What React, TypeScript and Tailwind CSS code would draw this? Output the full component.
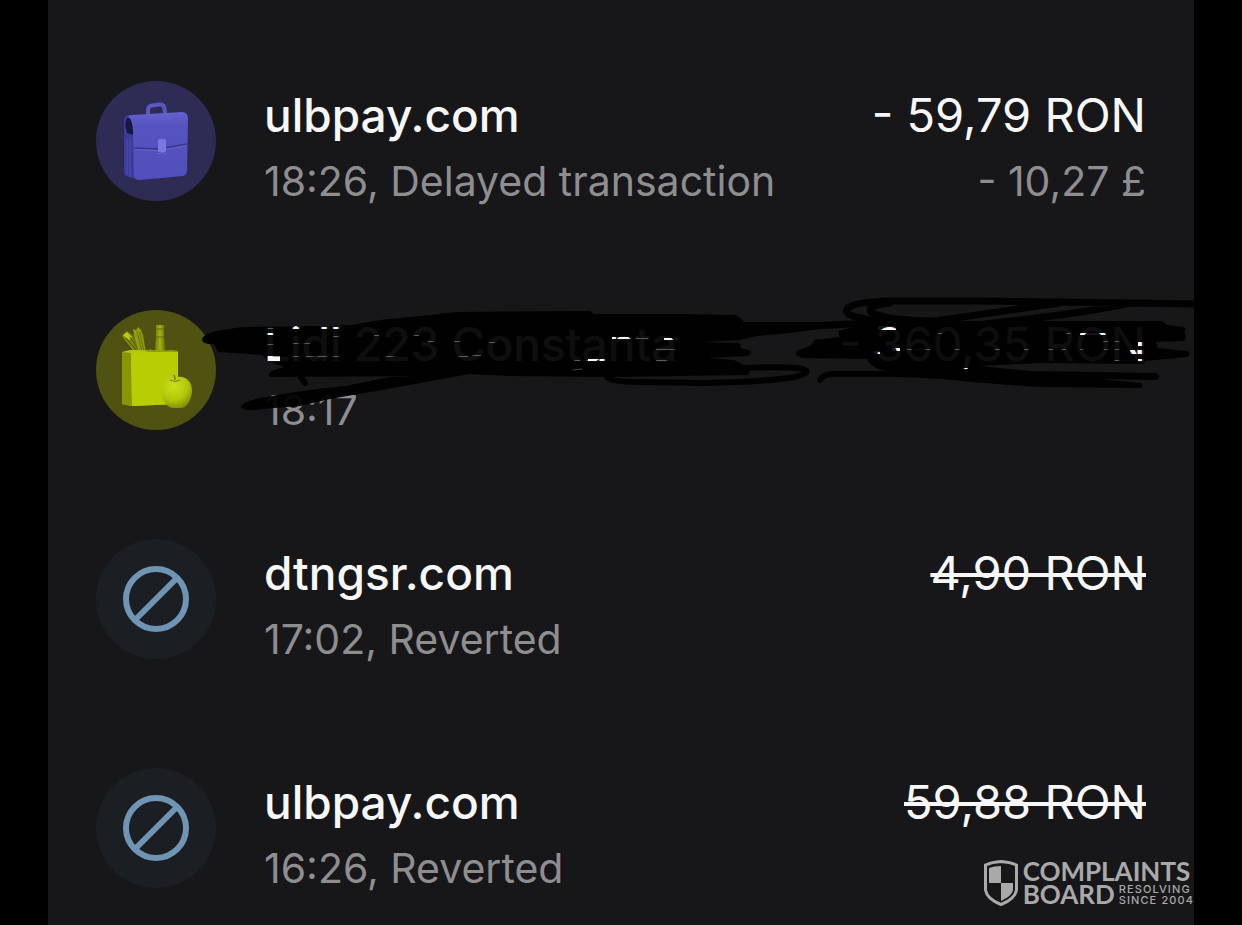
import { useId } from "react";

type IconName = "briefcase" | "groceries" | "blocked";

type Transaction = {
    merchant: string;
    details: string;
    amount: string;
    secondary?: string;
    icon: IconName;
    reverted?: boolean;
    redacted?: boolean;
};

const transactions: Transaction[] = [
    { merchant: "ulbpay.com", details: "18:26, Delayed transaction", amount: "- 59,79 RON", secondary: "- 10,27 £", icon: "briefcase" },
    { merchant: "Lidl 223 Constanta", details: "18:17", amount: "- 360,35 RON", icon: "groceries", redacted: true },
    { merchant: "dtngsr.com", details: "17:02, Reverted", amount: "4,90 RON", icon: "blocked", reverted: true },
    { merchant: "ulbpay.com", details: "16:26, Reverted", amount: "59,88 RON", icon: "blocked", reverted: true },
];

const BriefcaseIcon = () => (
    <svg className="size-30 shrink-0" viewBox="0 0 120 120" aria-hidden="true">
        <defs>
            <linearGradient id="case-front" x1="0" y1="0" x2="0" y2="1">
                <stop offset="0" stopColor="#6562d0" />
                <stop offset="0.2" stopColor="#5754c0" />
                <stop offset="1" stopColor="#514fbd" />
            </linearGradient>
        </defs>
        <circle cx="60" cy="60" r="60" fill="#2e2c55" />
        <path d="M52 35v-6q0-4 4-4.500l7-1q5-0.500 5.500 4l.5 6" fill="none" stroke="#5b58bd" strokeWidth="4" />
        <path d="M28 40q0-5 4-6l5 4 3 60-10-3q-2-1-2-3z" fill="#3d3a99" />
        <path d="M31 37q7-1 7 9v8l-7-2q-3-9 0-15z" fill="#1a1742" />
        <path d="M31 58v36M34 58v38" stroke="#514eb0" strokeWidth="1" />
        <path d="M32 35q1-1 4-1l50-3q6 0 6 7l-1 52q0 4-4 5l-44 4q-4 0-5-4l-1-45q0-10-5-15z" fill="url(#case-front)" />
        <path d="M38 67l25 1 28-5" fill="none" stroke="#38358c" strokeWidth="1.500" />
        <path d="M39 68.500l24 1.200 27-5" fill="none" stroke="#6663cf" strokeWidth="1" />
        <rect x="62" y="58" width="8" height="15" rx="2" fill="#7c78e2" />
        <path d="M62 71q4 3 8 0" fill="none" stroke="#48459f" strokeWidth="1" />
    </svg>
);

const GroceriesIcon = () => (
    <svg className="size-30 shrink-0" viewBox="0 0 120 120" aria-hidden="true">
        <defs>
            <radialGradient id="apple" cx="0.4" cy="0.3" r="0.75">
                <stop offset="0" stopColor="#cbe01a" />
                <stop offset="0.6" stopColor="#b2c70a" />
                <stop offset="1" stopColor="#7d8d08" />
            </radialGradient>
            <linearGradient id="bottle" x1="0" x2="1">
                <stop offset="0" stopColor="#6d7a08" />
                <stop offset="0.5" stopColor="#a1b30c" />
                <stop offset="1" stopColor="#66720a" />
            </linearGradient>
        </defs>
        <circle cx="60" cy="60" r="60" fill="#4f5210" />
        <path d="M26 26l5-5 5 4 8 17h-6z" fill="#7e8e0a" />
        <path d="M27 25l4-3 5 5-3 3z" fill="#b7cd12" />
        <path d="M26 31l13 12M30 28l12 14M34 27l10 15" stroke="#444b08" strokeWidth="1" />
        <path d="M37 19l3 1 2-3 3 3 2 5 3 18h-7l-5-17z" fill="#8e9f0b" />
        <path d="M41 21l5 21M44 22l4 20" stroke="#65710a" strokeWidth="1" />
        <path d="M60 15h8v13q1 4 1 15H59q0-11 1-15z" fill="url(#bottle)" />
        <path d="M60 19h8M60 27h8" stroke="#616d08" strokeWidth="1" />
        <path d="M26 42l8-2 48 1v53l-46 2-10-2z" fill="#b4c804" />
        <path d="M26 42l9 1 1 53-10-2z" fill="#869604" />
        <path d="M35 43l47-2v53l-46 2z" fill="#b9cd04" />
        <path d="M50 42l4-3 3 2 5-2 4 2 10-1 6 1v1z" fill="#8e9f0b" />
        <path d="M79 68c-7-4-14 2-14 11 0 10 6 19 12 19h8c6 0 11-9 11-18 0-10-9-16-17-12z" fill="url(#apple)" />
        <path d="M74 70q5 3 10 0" fill="none" stroke="#73820a" strokeWidth="1" />
        <path d="M79 70q0-3-1-5" fill="none" stroke="#6d7908" strokeWidth="1.500" />
    </svg>
);

const BlockedIcon = () => (
    <svg className="size-30 shrink-0" viewBox="0 0 120 120" aria-hidden="true">
        <circle cx="60" cy="60" r="60" fill="#1b1f24" />
        <circle cx="60" cy="60" r="30" fill="none" stroke="#7094b3" strokeWidth="6" />
        <path d="M40 80L80 40" stroke="#7094b3" strokeWidth="6" />
    </svg>
);

const icons = {
    briefcase: BriefcaseIcon,
    groceries: GroceriesIcon,
    blocked: BlockedIcon,
};

// x, y, width, height of the slits between marker strokes
const slits = [
    [266, 328, 8, 1], [266, 333, 8, 2], [266, 344, 8, 1], [267, 356, 13, 6],
    [292, 325, 8, 4], [292, 343, 18, 1], [292, 356, 50, 1],
    [320, 326, 9, 3], [332, 326, 9, 3], [333, 336, 8, 1],
    [374, 335, 8, 1], [394, 335, 8, 1], [411, 335, 8, 1], [384, 356, 12, 1], [428, 341, 7, 1],
    [454, 341, 8, 1], [458, 356, 10, 1], [472, 355, 12, 1], [488, 342, 10, 1],
    [612, 337, 20, 2], [636, 338, 12, 1], [664, 338, 14, 2], [656, 349, 22, 1],
    [574, 360, 14, 1], [588, 359, 18, 2], [656, 360, 12, 1],
    [843, 348, 14, 1], [878, 326, 18, 4], [874, 351, 6, 3], [892, 348, 8, 3],
    [906, 349, 24, 1], [934, 333, 8, 1], [950, 349, 10, 1], [995, 349, 6, 1],
    [1024, 349, 8, 1], [1048, 349, 18, 1], [1064, 333, 7, 1], [1080, 333, 26, 2],
    [1080, 349, 6, 1], [1103, 341, 18, 1], [1104, 349, 16, 1], [1138, 342, 6, 4],
    [1130, 350, 14, 4], [1114, 360, 20, 1], [1138, 359, 6, 3], [985, 361, 8, 1],
    [1012, 361, 12, 1], [1090, 361, 14, 1], [963, 368, 5, 2],
];

const Scribble = () => {
    const maskId = useId();

    return (
        <svg
            className="pointer-events-none absolute inset-x-0 -top-5 w-full"
            viewBox="48 290 1146 140"
            fill="none"
            strokeLinecap="round"
            strokeLinejoin="round"
            aria-hidden="true"
        >
            <mask id={maskId} maskUnits="userSpaceOnUse" x="48" y="290" width="1146" height="140">
                <rect x="48" y="290" width="1146" height="140" fill="#fff" />
                {slits.map(([x, y, width, height]) => (
                    <rect key={`${x}-${y}`} x={x} y={y} width={width} height={height} fill={height > 1 ? "#000" : "#aaa"} />
                ))}
            </mask>
            <g opacity="0.94" mask={`url(#${maskId})`}>
                <path
                    fill="#000"
                    d="M202 339Q204 334 216 331L242 327L330 326L352 325L380 320L430 315L455 312L590 311L594 314L680 314L735 315Q741 317 744 322L840 322L842 326L790 333L757 336L740 340L702 342L738 343Q743 346 740 348L749 350Q754 353 747 356L708 358L734 360Q744 364 750 371L748 375L608 377L510 376L470 374L445 376L270 377Q264 372 284 367L268 361L262 355L218 352L214 344Q202 345 202 339Z"
                />
                <path fill="#000" d="M241 407Q242 402 256 399Q300 390 345 386L390 377L470 374Q400 387 330 399L300 406L262 409Q245 412 241 407Z" />
                <path stroke="#000" strokeWidth="6" d="M299 374L305 383" />
                <path
                    stroke="#000"
                    strokeWidth="6"
                    d="M607 377Q610 382 640 382L700 383Q765 382 795 377Q813 372 803 369Q790 366 745 368"
                />
                <path
                    fill="#000"
                    d="M838 331L870 323L940 321L1162 321L1167 325L1183 327Q1188 329 1184 332Q1188 337 1184 341L1156 342L1158 348L1187 351Q1192 354 1187 357L1145 361L1144 364L1040 363L980 366L1030 371L1156 373Q1163 377 1156 380L1100 379L1142 383L1142 388L1040 387Q960 382 920 376L880 370Q869 365 867 359L802 358Q793 355 797 351L812 345L814 340L840 337Z"
                />
                <path
                    stroke="#000"
                    strokeWidth="7"
                    d="M1196 304L1130 303L1060 302L980 301L890 301Q855 302 848 308Q841 314 861 318L885 324M890 303Q864 306 872 313Q890 321 935 321L1060 303M985 324Q1080 314 1130 303M758 329L870 323"
                />
                <path stroke="#000" strokeWidth="6" d="M820 380Q824 374 832 374L900 374L985 378" />
            </g>
            <path stroke="#4a4a4c" d="M573 370L582 369" />
        </svg>
    );
};

const TransactionRow = ({ merchant, details, amount, secondary, icon, reverted, redacted }: Transaction) => {
    const Icon = icons[icon];

    return (
        <li className="relative flex items-start px-12">
            <Icon />
            <div className="ml-12 min-w-0 flex-1">
                <p className="text-[46px] leading-[68px] font-medium">{merchant}</p>
                <p className="text-[41px] leading-[64px] text-[#8e8e91]">{details}</p>
            </div>
            <div className="text-right whitespace-nowrap">
                <p className="text-[47px] leading-[68px]">
                    {reverted ? <s className="decoration-4">{amount}</s> : amount}
                </p>
                {secondary && <p className="text-[41px] leading-[64px] text-[#8e8e91]">{secondary}</p>}
            </div>
            {redacted && <Scribble />}
        </li>
    );
};

const Watermark = () => (
    <div className="absolute right-0 bottom-[18px] flex items-center gap-1 font-['Lato',sans-serif] text-[#a9a9aa]">
        <svg className="h-12 w-9" viewBox="0 0 36 48" aria-hidden="true">
            <path d="M18 2.500Q27 3 33.500 6V31Q32 40 18 45.500Q4 40 2.500 31V6Q9 3 18 2.500Z" fill="none" stroke="currentColor" strokeWidth="3" />
            <path d="M18 7v17H6V9Q11 7 18 7ZM18 24h12v7q-1 6-12 11Z" fill="currentColor" />
        </svg>
        <div>
            <p className="text-[26px] leading-[23px] font-bold">COMPLAINTS</p>
            <div className="flex items-center gap-1">
                <p className="text-[26px] leading-[23px] font-bold">BOARD</p>
                <p className="font-['Inter',sans-serif] text-[11px] leading-[11px] font-medium tracking-widest">
                    RESOLVING
                    <br />
                    SINCE 2004
                </p>
            </div>
        </div>
    </div>
);

const App = () => {
    return (
        <main className="min-h-screen bg-black px-12 font-['Inter',sans-serif] text-[#f7f7f8]">
            <section className="relative min-h-screen bg-[#171719] pt-[81px]">
                <ul className="flex flex-col gap-[97px]">
                    {transactions.map((transaction) => (
                        <TransactionRow key={transaction.details} {...transaction} />
                    ))}
                </ul>
                <Watermark />
            </section>
        </main>
    );
};

export default App;
